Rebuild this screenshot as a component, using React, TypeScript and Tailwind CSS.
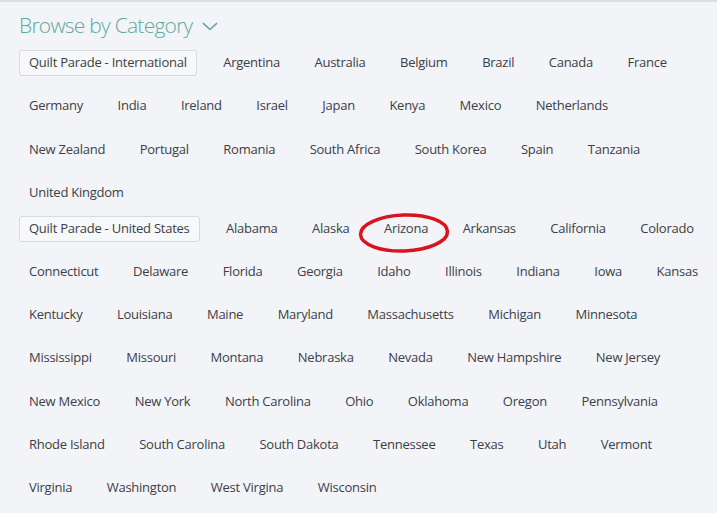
import React from "react";

// Browse by Category – country / state chips
const INTERNATIONAL = [
  "Argentina", "Australia", "Belgium", "Brazil", "Canada", "France",
  "Germany", "India", "Ireland", "Israel", "Japan", "Kenya", "Mexico", "Netherlands",
  "New Zealand", "Portugal", "Romania", "South Africa", "South Korea", "Spain", "Tanzania",
  "United Kingdom",
];

const STATES = [
  "Alabama", "Alaska", "Arizona", "Arkansas", "California", "Colorado",
  "Connecticut", "Delaware", "Florida", "Georgia", "Idaho", "Illinois", "Indiana", "Iowa", "Kansas",
  "Kentucky", "Louisiana", "Maine", "Maryland", "Massachusetts", "Michigan", "Minnesota",
  "Mississippi", "Missouri", "Montana", "Nebraska", "Nevada", "New Hampshire", "New Jersey",
  "New Mexico", "New York", "North Carolina", "Ohio", "Oklahoma", "Oregon", "Pennsylvania",
  "Rhode Island", "South Carolina", "South Dakota", "Tennessee", "Texas", "Utah", "Vermont",
  "Virginia", "Washington", "West Virgina", "Wisconsin",
];

function Chip({ label, boxed, circled }: { label: string; boxed?: boolean; circled?: boolean }) {
  return (
    <span
      className={`relative flex items-center h-[26px] text-[13px] tracking-[-0.25px] text-[#3b4048] whitespace-nowrap ${
        boxed ? "border border-[#d6d9de] rounded-[3px] bg-[#f7f8fa] px-[9px] mr-[2px]" : "px-[10px]"
      }`}
    >
      {label}
      {circled && (
        <svg
          className="absolute left-[-16px] top-[-5px] w-[92px] h-[44px] pointer-events-none"
          viewBox="0 0 92 44"
          fill="none"
        >
          <ellipse
            cx="46"
            cy="22"
            rx="43.5"
            ry="18"
            stroke="#d8141f"
            strokeWidth="3.5"
            transform="rotate(-2 46 22)"
          />
        </svg>
      )}
    </span>
  );
}

function Group({ title, items }: { title: string; items: string[] }) {
  return (
    <div className="flex flex-wrap gap-x-[14.5px] gap-y-[17.2px]">
      <Chip label={title} boxed />
      {items.map((name) => (
        <Chip key={name} label={name} circled={name === "Arizona"} />
      ))}
    </div>
  );
}

export default function App() {
  return (
    <div
      className="h-[513px] w-[717px] bg-[#f3f4f7] border-t-2 border-[#dcdee2] overflow-hidden"
      style={{ fontFamily: '"Open Sans", sans-serif' }}
    >
      <div className="pl-[19px] pt-[9px]">
        <div className="flex items-center h-[28px] mb-[11px]">
          <h2 className="text-[21px] font-light text-[#5ea9a1] leading-none tracking-[-0.75px]">
            Browse by Category
          </h2>
          <svg className="ml-[10px] mt-[2px] w-[16px] h-[9px]" viewBox="0 0 16 9" fill="none">
            <path d="M1 1.2l7 6.3 7-6.3" stroke="#5ea9a1" strokeWidth="1.6" />
          </svg>
        </div>
        <div className="mb-[10px]">
          <Group title="Quilt Parade - International" items={INTERNATIONAL} />
        </div>
        <Group title="Quilt Parade - United States" items={STATES} />
      </div>
    </div>
  );
}
